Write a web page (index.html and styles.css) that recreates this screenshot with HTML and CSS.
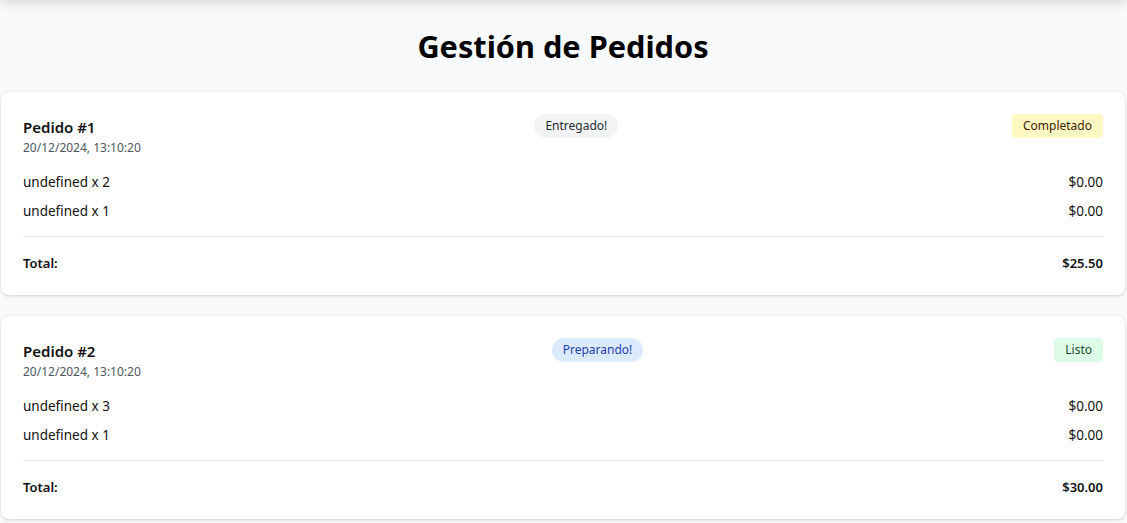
FILE: index.html
```html
<!DOCTYPE html>
<html lang="es">
<head>
<meta charset="utf-8">
<title>Gestión de Pedidos</title>
<link rel="stylesheet" href="styles.css">
</head>
<body>
<div class="topshade"></div>
<main class="page">
  <h1 class="title">Gestión de Pedidos</h1>

  <section class="card">
    <div class="card-head">
      <div class="order-info">
        <div class="order-name">Pedido #1</div>
        <div class="order-date">20/12/2024, 13:10:20</div>
      </div>
      <span class="pill pill-gray">Entregado!</span>
      <span class="tag tag-yellow">Completado</span>
    </div>
    <div class="items">
      <div class="row"><span>undefined x 2</span><span>$0.00</span></div>
      <div class="row"><span>undefined x 1</span><span>$0.00</span></div>
    </div>
    <div class="total row"><span>Total:</span><span>$25.50</span></div>
  </section>

  <section class="card">
    <div class="card-head">
      <div class="order-info">
        <div class="order-name">Pedido #2</div>
        <div class="order-date">20/12/2024, 13:10:20</div>
      </div>
      <span class="pill pill-blue">Preparando!</span>
      <span class="tag tag-green">Listo</span>
    </div>
    <div class="items">
      <div class="row"><span>undefined x 3</span><span>$0.00</span></div>
      <div class="row"><span>undefined x 1</span><span>$0.00</span></div>
    </div>
    <div class="total row"><span>Total:</span><span>$30.00</span></div>
  </section>
</main>
</body>
</html>
```

FILE: styles.css
```css
* { box-sizing: border-box; }
html, body { margin: 0; padding: 0; }
body {
  background: #f9fafb;
  font-family: "Noto Sans", "Open Sans", sans-serif;
  color: #111827;
  overflow: hidden;
}
.topshade {
  position: fixed;
  top: -20px;
  left: 0;
  right: 0;
  height: 20px;
  box-shadow: 0 2px 14px rgba(0, 0, 0, 0.16);
  background: #f9fafb;
}
.page {
  padding: 28px 2px 0 1px;
}
.title {
  margin: 0 0 28px;
  text-align: center;
  font-size: 30.7px;
  line-height: 36px;
  font-weight: 700;
  color: #000;
}
.card {
  background: #fff;
  border-radius: 8px;
  box-shadow: 0 1px 4px rgba(0, 0, 0, 0.12), 0 1px 2px rgba(0, 0, 0, 0.06);
  padding: 22px 22px 22px;
  margin-bottom: 21px;
}
.card-head {
  display: flex;
  justify-content: space-between;
  align-items: flex-start;
  margin-bottom: 16px;
}
.order-name {
  font-size: 15px;
  font-weight: 600;
  line-height: 26px;
  color: #111;
}
.order-date {
  font-size: 12px;
  line-height: 16px;
  color: #4b5563;
}
.pill {
  font-size: 12px;
  line-height: 24px;
  padding: 0 11px;
  border-radius: 999px;
}
.pill-gray { background: #f3f4f6; color: #1f2937; }
.pill-blue { background: #dbeafe; color: #1e40af; }
.tag {
  font-size: 12px;
  line-height: 24px;
  padding: 0 11px;
  border-radius: 4px;
}
.tag-yellow { background: #fef9c3; color: #422006; }
.tag-green { background: #dcfce7; color: #14532d; }
.items {
  display: flex;
  flex-direction: column;
  gap: 9px;
  padding-bottom: 15px;
  border-bottom: 1px solid #e5e7eb;
}
.row {
  display: flex;
  justify-content: space-between;
  font-size: 13.5px;
  line-height: 20px;
  color: #111;
}
.total {
  padding-top: 16px;
  font-weight: 600;
  font-size: 13px;
}
```
